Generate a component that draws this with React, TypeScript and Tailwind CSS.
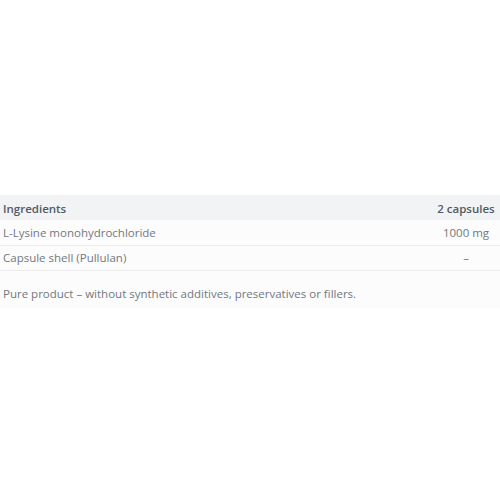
export default function App() {
  const font = { fontFamily: '"Open Sans", "Noto Sans", sans-serif' };
  return (
    <div className="w-[500px] h-[500px] bg-white" style={font}>
      <div className="pt-[195px]">
        <div className="bg-[#fcfcfc] pb-[6px]">
          <table className="w-full border-collapse text-[11.5px]">
            <thead>
              <tr className="bg-[#f2f3f4] h-[25px]">
                <th className="text-left font-semibold text-[#525a63] pl-[3px] pt-[2px]">Ingredients</th>
                <th className="text-center font-semibold text-[#525a63] w-[64px] pr-[4px] pt-[2px]">2 capsules</th>
              </tr>
            </thead>
            <tbody>
              <tr className="h-[25px] border-b border-[#ececec]">
                <td className="text-left text-[#72787f] pl-[3px]">L-Lysine monohydrochloride</td>
                <td className="text-center text-[#72787f] pr-[4px]">1000 mg</td>
              </tr>
              <tr className="h-[25px] border-b border-[#ececec]">
                <td className="text-left text-[#72787f] pl-[3px]">Capsule shell (Pullulan)</td>
                <td className="text-center text-[#72787f] pr-[4px]">–</td>
              </tr>
            </tbody>
          </table>
          <p className="text-[11.5px] text-[#72787f] pl-[3px] mt-[14px]">
            Pure product – without synthetic additives, preservatives or fillers.
          </p>
        </div>
      </div>
    </div>
  );
}
